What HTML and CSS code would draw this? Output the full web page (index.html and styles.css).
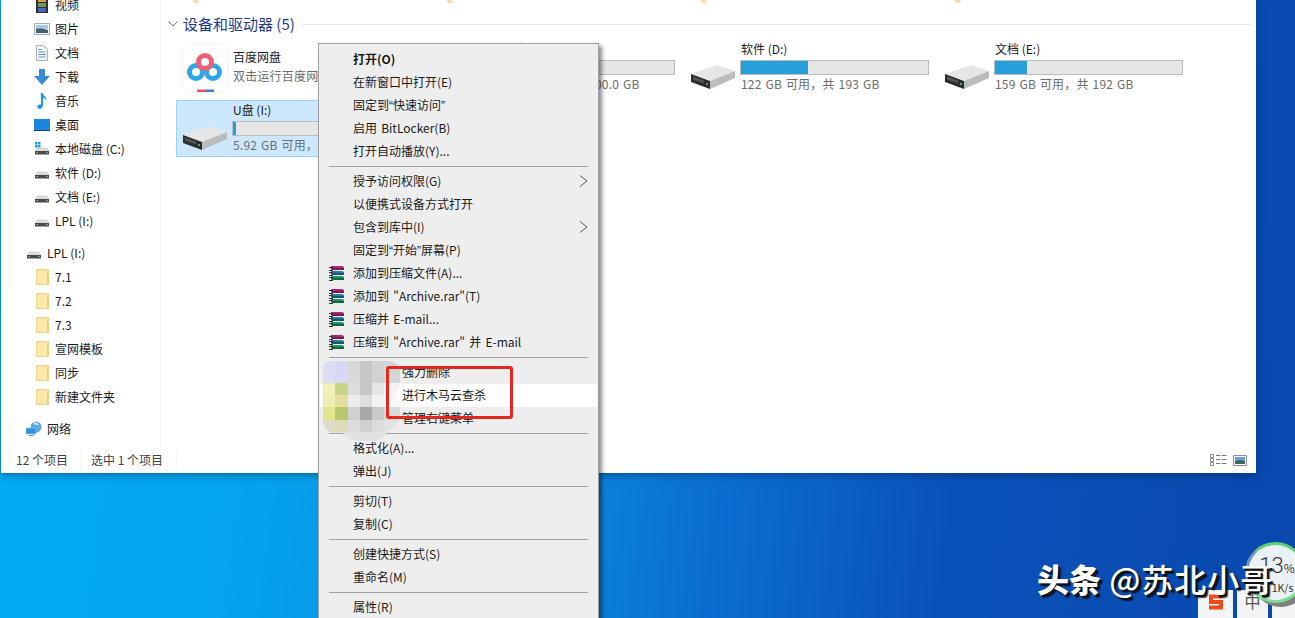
FILE: index.html
```html
<!DOCTYPE html>
<html lang="zh-CN">
<head>
<meta charset="utf-8">
<title>U盘 右键菜单</title>
<link rel="stylesheet" href="styles.css">
</head>
<body>
<svg class="defs" width="0" height="0" aria-hidden="true">
  <defs>
    <symbol id="drive-s" viewBox="0 0 16 16">
      <path d="M3 6.500h10l2 3v1H1v-1z" fill="#d8d8d8"/>
      <path d="M1 10h14v3.500H1z" fill="#4a4a4a"/>
      <path d="M2 11h2v1H2z" fill="#9a9a9a"/>
      <path d="M12 11h1.500v1H12z" fill="#8fe08f"/>
    </symbol>
    <symbol id="drive-l" viewBox="0 0 45 24">
      <path d="M0 9 26 0l18 6-25 10z" fill="#e6e6e6"/>
      <path d="M19 16 44 6v7L19 24z" fill="#bcbcbc"/>
      <path d="M0 9l19 7v8L0 17z" fill="#2c2c2c"/>
      <path d="M2 11.500l11 4v3l-11-4z" fill="#555"/>
      <circle cx="16" cy="19" r="1" fill="#5fd65f"/>
    </symbol>
    <symbol id="folder" viewBox="0 0 13 16">
      <path d="M.5.500h12v15H.5z" fill="#fce9a9" stroke="#f0d78c"/>
      <path d="M11 2h1.500v13.500H2V15h9z" fill="#ecce74"/>
    </symbol>
    <symbol id="rar" viewBox="0 0 16 16">
      <path d="M2 1h11l2 1v3H4L2 4z" fill="#b0247e"/>
      <path d="M2 6h11l2 1v3H4L2 9z" fill="#1f7fa8"/>
      <path d="M2 11h11l2 1v3H4l-2-1z" fill="#18985c"/>
      <path d="M2 4h13M2 9h13M2 14h13" stroke="#111" stroke-width=".8" fill="none"/>
      <path d="M0 2h4v1H0zM0 5h4v1H0zM0 7h4v1H0zM0 10h4v1H0zM0 12h4v1H0zM0 15h4v1H0z" fill="#333"/>
    </symbol>
    <symbol id="chev" viewBox="0 0 9 12">
      <path d="M1 .5 8 6l-7 5.500" fill="none" stroke="#5a5a5a" stroke-width="1"/>
    </symbol>
  </defs>
</svg>

<div class="desktop">
  <main class="explorer">
    <div class="explorer-body">
      <nav class="sidebar">
        <ul class="tree">
          <li class="node">
            <svg class="ico" viewBox="0 0 16 16"><path d="M2 0h12v16H2z" fill="#2f2f3a"/><path d="M4 1h8v4H4z" fill="#d8a040"/><path d="M4 6h8v4H4z" fill="#6a9a58"/><path d="M4 11h8v4H4z" fill="#4468c0"/></svg>
            <span>视频</span>
          </li>
          <li class="node">
            <svg class="ico" viewBox="0 0 16 16"><path d="M.5 2.500h15v11H.5z" fill="#f4f6f8" stroke="#a4acb4"/><path d="M2 4h12v4H2z" fill="#a8c8e8"/><path d="M2 8c4-1 8 0 12 1v3H2z" fill="#46606a"/></svg>
            <span>图片</span>
          </li>
          <li class="node">
            <svg class="ico" viewBox="0 0 16 16"><path d="M2.500.5h7l4 4v11h-11z" fill="#f6f8fa" stroke="#a8b0b8"/><path d="M4.500 4h3v1h-3zM4.500 6.500h7v1h-7zM4.500 9h7v1h-7zM4.500 11.500h7v1h-7z" fill="#4c9ad0"/></svg>
            <span>文档</span>
          </li>
          <li class="node">
            <svg class="ico" viewBox="0 0 16 16"><path d="M5 0h6v7h5l-8 9-8-9h5z" fill="#3d8bd8"/></svg>
            <span>下载</span>
          </li>
          <li class="node">
            <svg class="ico" viewBox="0 0 16 16"><path d="M7 0h1.800c.3 3 4.200 3.500 3.700 8-.6-2-2-3-3.500-3.300V12.500C9 15 6.500 16 5 15.800 3 15.600 2.800 13.500 4 12.300c.9-.9 2-1 3-.7z" fill="#1e96e6"/></svg>
            <span>音乐</span>
          </li>
          <li class="node">
            <svg class="ico" viewBox="0 0 16 16"><path d="M0 2h16v11H0z" fill="#1a86e0"/><path d="M0 13h16v1H0z" fill="#0c3e78"/></svg>
            <span>桌面</span>
          </li>
          <li class="node">
            <svg class="ico" viewBox="0 0 16 16"><use href="#drive-s"/><path d="M1 1h2.500v2.500H1zM4 1h2.500v2.500H4zM1 4h2.500v2.500H1zM4 4h2.500v2.500H4z" fill="#1ea0dc"/></svg>
            <span>本地磁盘 (C:)</span>
          </li>
          <li class="node"><svg class="ico"><use href="#drive-s"/></svg><span>软件 (D:)</span></li>
          <li class="node"><svg class="ico"><use href="#drive-s"/></svg><span>文档 (E:)</span></li>
          <li class="node"><svg class="ico"><use href="#drive-s"/></svg><span>LPL (I:)</span></li>
        </ul>
        <ul class="tree tree-gap">
          <li class="node root"><svg class="ico"><use href="#drive-s"/></svg><span>LPL (I:)</span></li>
          <li class="node"><svg class="ico-folder"><use href="#folder"/></svg><span>7.1</span></li>
          <li class="node"><svg class="ico-folder"><use href="#folder"/></svg><span>7.2</span></li>
          <li class="node"><svg class="ico-folder"><use href="#folder"/></svg><span>7.3</span></li>
          <li class="node"><svg class="ico-folder"><use href="#folder"/></svg><span>宣网模板</span></li>
          <li class="node"><svg class="ico-folder"><use href="#folder"/></svg><span>同步</span></li>
          <li class="node"><svg class="ico-folder"><use href="#folder"/></svg><span>新建文件夹</span></li>
        </ul>
        <ul class="tree tree-gap">
          <li class="node root">
            <svg class="ico" viewBox="0 0 16 16"><circle cx="10" cy="6" r="5.500" fill="#5aa8dc"/><path d="M7 2c3-1 5 0 6 2-3 0-5 0-6-2z" fill="#cfe8f8"/><path d="M0 7h10v6H0z" fill="#2e94e0" stroke="#8cc4ec" stroke-width=".6"/><path d="M3 14h5v1H3z" fill="#5a90b8"/></svg>
            <span>网络</span>
          </li>
        </ul>
      </nav>

      <section class="content">
        <div class="cutoff">
          <span class="cutoff-mark"></span>
          <span class="cutoff-mark"></span>
          <span class="cutoff-mark"></span>
          <span class="cutoff-mark"></span>
        </div>
        <header class="group-head">
          <svg class="group-chev" viewBox="0 0 10 6"><path d="M.5.500 5 5 9.500.5" fill="none" stroke="#7a7a7a"/></svg>
          <h2 class="group-title">设备和驱动器 (5)</h2>
          <div class="group-rule"></div>
        </header>
        <div class="tiles">
          <article class="tile">
            <div class="tile-icon">
              <svg class="baidu" viewBox="0 0 47 49">
                <rect x=".5" y=".5" width="46" height="48" rx="9" fill="#fff" stroke="#f2f2f2"/>
                <circle cx="14" cy="28" r="6.500" fill="none" stroke="#2ea7ea" stroke-width="5"/>
                <circle cx="31" cy="28" r="6.500" fill="none" stroke="#2ea7ea" stroke-width="5"/>
                <circle cx="23" cy="18" r="6.500" fill="none" stroke="#ee5f73" stroke-width="5"/>
                <path d="M15 45.500h8v2.500h-8z" fill="#ee4f62"/>
                <path d="M23 45.500h9v2.500h-9z" fill="#3a7fe0"/>
              </svg>
            </div>
            <div class="tile-info tile-info-app">
              <div class="tile-name">百度网盘</div>
              <div class="tile-sub">双击运行百度网盘</div>
            </div>
          </article>
          <article class="tile">
            <div class="tile-icon"><svg class="drive"><use href="#drive-l"/></svg></div>
            <div class="tile-info">
              <div class="tile-name">本地磁盘 (C:)</div>
              <div class="bar"><div class="bar-fill" style="width:60%"></div></div>
              <div class="tile-sub">40.0 GB 可用，共 100.0 GB</div>
            </div>
          </article>
          <article class="tile">
            <div class="tile-icon"><svg class="drive"><use href="#drive-l"/></svg></div>
            <div class="tile-info">
              <div class="tile-name">软件 (D:)</div>
              <div class="bar"><div class="bar-fill" style="width:36%"></div></div>
              <div class="tile-sub">122 GB 可用，共 193 GB</div>
            </div>
          </article>
          <article class="tile">
            <div class="tile-icon"><svg class="drive"><use href="#drive-l"/></svg></div>
            <div class="tile-info">
              <div class="tile-name">文档 (E:)</div>
              <div class="bar"><div class="bar-fill" style="width:17%"></div></div>
              <div class="tile-sub">159 GB 可用，共 192 GB</div>
            </div>
          </article>
          <article class="tile tile-selected">
            <div class="tile-icon"><svg class="drive"><use href="#drive-l"/></svg></div>
            <div class="tile-info">
              <div class="tile-name">U盘 (I:)</div>
              <div class="bar"><div class="bar-fill" style="width:1.500%"></div></div>
              <div class="tile-sub">5.92 GB 可用，共 7.5 GB</div>
            </div>
          </article>
        </div>
      </section>
    </div>

    <footer class="status">
      <span class="status-cell status-count">12 个项目</span>
      <span class="status-cell status-sel">选中 1 个项目</span>
      <div class="status-views">
        <svg class="view-ico" viewBox="0 0 17 12"><path d="M.5.500h3v3h-3zM.5 4.500h3v3h-3zM.5 8.500h3v3h-3z" fill="none" stroke="#8a8a8a"/><path d="M6 1.500h4M11.500 1.500h5M6 5.500h4M11.500 5.500h5M6 9.500h4M11.500 9.500h5" stroke="#777"/></svg>
        <svg class="view-ico view-ico-large" viewBox="0 0 14 11"><path d="M.5.500h13v10H.5z" fill="#fff" stroke="#8a9098"/><path d="M2 2h10v4H2z" fill="#6c9ce0"/><path d="M2 6c3-1 7-1 10 0v3H2z" fill="#3c6a50"/></svg>
      </div>
    </footer>
  </main>

  <div class="tray">
    <div class="tray-key"><svg class="sogou" viewBox="0 0 18 18"><path d="M16 3.500H4v5.500h10v5.500H2" fill="none" stroke="#f04a1c" stroke-width="4"/></svg></div>
    <div class="tray-key tray-key-ime">中</div>
    <div class="tray-key"></div>
  </div>
  <div class="meter">
    <div class="meter-value"><span class="meter-num">13</span><span class="meter-pct">%</span></div>
    <div class="meter-rate">1K/s</div>
  </div>
  <div class="watermark"><b>头条</b> @苏北小哥</div>

  <aside class="menu">
    <div class="item item-bold">打开(O)</div>
    <div class="item">在新窗口中打开(E)</div>
    <div class="item">固定到<span class="q">“</span>快速访问<span class="q">”</span></div>
    <div class="item">启用 BitLocker(B)</div>
    <div class="item">打开自动播放(Y)...</div>
    <div class="sep"></div>
    <div class="item">授予访问权限(G)<svg class="item-chev"><use href="#chev"/></svg></div>
    <div class="item">以便携式设备方式打开</div>
    <div class="item">包含到库中(I)<svg class="item-chev"><use href="#chev"/></svg></div>
    <div class="item">固定到<span class="q">“</span>开始<span class="q">”</span>屏幕(P)</div>
    <div class="item item-icon"><svg class="item-rar"><use href="#rar"/></svg>添加到压缩文件(A)...</div>
    <div class="item item-icon"><svg class="item-rar"><use href="#rar"/></svg>添加到 "Archive.rar"(T)</div>
    <div class="item item-icon"><svg class="item-rar"><use href="#rar"/></svg>压缩并 E-mail...</div>
    <div class="item item-icon"><svg class="item-rar"><use href="#rar"/></svg>压缩到 "Archive.rar" 并 E-mail</div>
    <div class="sep"></div>
    <div class="item item-far">强力删除</div>
    <div class="item item-far item-hover">进行木马云查杀</div>
    <div class="item item-far">管理右键菜单</div>
    <div class="sep"></div>
    <div class="item">格式化(A)...</div>
    <div class="item">弹出(J)</div>
    <div class="sep"></div>
    <div class="item">剪切(T)</div>
    <div class="item">复制(C)</div>
    <div class="sep"></div>
    <div class="item">创建快捷方式(S)</div>
    <div class="item">重命名(M)</div>
    <div class="sep"></div>
    <div class="item">属性(R)</div>
  </aside>

  <svg class="mosaic" viewBox="0 0 77 84" shape-rendering="crispEdges" aria-hidden="true">
    <defs><clipPath id="mosaic-clip"><path d="M6 0h60q8 0 11 8v18l-6 8 6 8v16q-3 8-12 12-4 8-14 10H33Q24 79 20 72H8Q0 68 0 60V8Q0 2 6 0z"/></clipPath></defs>
    <g clip-path="url(#mosaic-clip)">
      <path d="M0 0h12v22H0z" fill="#dcdcf2"/><path d="M12 0h13v22H12z" fill="#d8d8f6"/><path d="M25 0h12v22H25z" fill="#d8d8d8"/><path d="M37 0h12v22H37z" fill="#c6c6c6"/><path d="M49 0h12v22H49z" fill="#d2d2d2"/><path d="M61 0h16v22H61z" fill="#d6d6d6"/>
      <path d="M0 22h12v12H0z" fill="#eef2b8"/><path d="M12 22h13v12H12z" fill="#c8d488"/><path d="M25 22h12v12H25z" fill="#dcdcdc"/><path d="M37 22h12v12H37z" fill="#c6c6c6"/><path d="M49 22h12v12H49z" fill="#e6e6e6"/><path d="M61 22h16v12H61z" fill="#f4f4f4"/>
      <path d="M0 34h12v12H0z" fill="#eeeeb2"/><path d="M12 34h13v12H12z" fill="#e4e0a2"/><path d="M25 34h12v12H25z" fill="#ececec"/><path d="M37 34h12v12H37z" fill="#dedede"/><path d="M49 34h12v12H49z" fill="#f2f2f2"/><path d="M61 34h16v12H61z" fill="#f6f6f6"/>
      <path d="M0 46h12v13H0z" fill="#e2e68c"/><path d="M12 46h13v13H12z" fill="#b8c86a"/><path d="M25 46h12v13H25z" fill="#d0d0d0"/><path d="M37 46h12v13H37z" fill="#a8a8a8"/><path d="M49 46h12v13H49z" fill="#cacaca"/><path d="M61 46h16v13H61z" fill="#dadada"/>
      <path d="M0 59h12v12H0z" fill="#dcdcca"/><path d="M12 59h13v12H12z" fill="#dcdcba"/><path d="M25 59h12v12H25z" fill="#dcdcdc"/><path d="M37 59h12v12H37z" fill="#d0d0d0"/><path d="M49 59h12v12H49z" fill="#dcdcdc"/><path d="M61 59h16v12H61z" fill="#e2e2e2"/>
      <path d="M0 71h77v13H0z" fill="#e2e2e2"/>
    </g>
  </svg>
  <div class="callout"></div>
</div>
</body>
</html>
```
FILE: styles.css
```css
* { box-sizing: border-box; }

html, body {
  margin: 0;
  height: 100%;
  overflow: hidden;
}

body {
  font-family: "Noto Sans CJK SC", "Liberation Sans", sans-serif;
  font-size: 12px;
  color: #1a1a1a;
}

.defs { position: absolute; }

ul { list-style: none; margin: 0; padding: 0; }

.desktop {
  position: relative;
  width: 1295px;
  height: 618px;
  padding-left: 1px;
  overflow: hidden;
  background: linear-gradient(98deg, #00acf4 0%, #04a4ee 22%, #0a8ee0 42%, #0a6cd0 58%, #0a52ba 74%, #0a48ae 100%);
}

/* Explorer window */
.explorer {
  width: 1255px;
  height: 473px;
  display: flex;
  flex-direction: column;
  background: #fff;
  box-shadow: 0 2px 8px rgba(0, 30, 60, .45);
  overflow: hidden;
}

.explorer-body {
  flex: 1;
  min-height: 0;
  display: flex;
}

.sidebar {
  flex: 0 0 160px;
  border-right: 1px solid #f2f2f2;
  overflow: hidden;
}

.tree:first-child { margin-top: -7px; }
.tree-gap { margin-top: 8px; }

.node {
  height: 24px;
  display: flex;
  align-items: center;
  gap: 5px;
  padding-left: 33px;
  line-height: 24px;
  white-space: nowrap;
}

.node.root { padding-left: 25px; gap: 5px; }

.ico { width: 16px; height: 16px; flex: none; }

.ico-folder {
  width: 13px;
  height: 16px;
  flex: none;
  margin: 0 1px 0 2px;
}

/* Content pane */
.content {
  flex: 1;
  min-width: 0;
  padding-left: 7px;
}

.cutoff {
  height: 3px;
  display: flex;
  margin-left: 9px;
  overflow: hidden;
}

.cutoff-mark {
  flex: 0 0 254px;
  position: relative;
}

.cutoff-mark::after {
  content: "";
  position: absolute;
  left: 16px;
  top: -1px;
  width: 5px;
  height: 4px;
  background: #fbdca8;
  transform: skewX(35deg);
}

.group-head {
  height: 36px;
  display: flex;
  align-items: center;
  padding-top: 6px;
}

.group-chev { width: 10px; height: 6px; flex: none; }

.group-title {
  margin: 0 0 0 5px;
  font-size: 15px;
  font-weight: 400;
  line-height: 24px;
  color: #1e3a8c;
  white-space: nowrap;
}

.group-rule {
  flex: 1;
  height: 1px;
  margin: 0 5px 0 7px;
  background: #e6e6e6;
}

.tiles {
  display: grid;
  grid-template-columns: repeat(4, 250px);
  grid-auto-rows: 57px;
  gap: 4px;
  margin-left: 8px;
}

.tile {
  display: flex;
  border: 1px solid transparent;
}

.tile-selected {
  background: #cce8ff;
  border-color: #99d1ff;
}

.tile-icon {
  flex: 0 0 56px;
  display: flex;
  align-items: center;
  justify-content: center;
}

.drive {
  width: 45px;
  height: 24px;
  margin-top: 19px;
  margin-left: 1px;
}

.baidu { width: 47px; height: 49px; margin-top: 1px; }

.tile-info {
  flex: 1;
  min-width: 0;
  padding-top: 1px;
}

.tile-info-app { padding-top: 9px; }

.tile-name {
  line-height: 16px;
  height: 18px;
  white-space: nowrap;
}

.tile-sub {
  line-height: 18px;
  height: 18px;
  color: #6d6d6d;
  white-space: nowrap;
  letter-spacing: .2px;
  word-spacing: 1px;
}

.bar {
  width: 189px;
  height: 15px;
  margin: 1px 0 0 -1px;
  border: 1px solid #bcbcbc;
  background: #e6e6e6;
}

.bar-fill {
  height: 100%;
  background: #26a0da;
}

/* Status bar */
.status {
  flex: 0 0 26px;
  display: flex;
  align-items: center;
  padding-left: 15px;
  color: #3f3f3f;
}

.status-cell {
  line-height: 22px;
  white-space: nowrap;
  border-right: 1px solid #f6f6f6;
}

.status-count { width: 65px; }
.status-sel { width: 96px; padding-left: 10px; }

.status-views {
  margin-left: auto;
  display: flex;
  align-items: center;
  gap: 6px;
  padding-right: 9px;
}

.view-ico { width: 17px; height: 12px; }
.view-ico-large { width: 14px; height: 11px; }

/* Context menu */
.menu {
  position: absolute;
  left: 318px;
  top: 43px;
  width: 281px;
  padding: 4px 1px 0;
  background: #eeeeee;
  border: 1px solid #a0a0a0;
  box-shadow: 3px 3px 4px rgba(0, 0, 0, .45);
}

.item {
  position: relative;
  height: 23px;
  padding-left: 33px;
  line-height: 22px;
  white-space: nowrap;
  word-spacing: 1.500px;
  color: #1a1a1a;
}

.q { font-family: "Liberation Sans", sans-serif; }

.item-bold { font-weight: 700; }
.item-far { padding-left: 82px; }
.item-hover { background: #fff; }

.item-icon { display: flex; align-items: flex-start; padding-left: 9px; }

.item-rar {
  width: 16px;
  height: 16px;
  flex: none;
  margin: 3px 8px 0 0;
}

.item-chev {
  position: absolute;
  right: 9px;
  top: 5px;
  width: 9px;
  height: 12px;
}

.sep {
  height: 1px;
  margin: 3px 9px;
  background: #a0a0a0;
}

/* Overlays on the menu */
.mosaic {
  position: absolute;
  left: 323px;
  top: 361px;
  width: 77px;
  height: 84px;
}

.callout {
  position: absolute;
  left: 386px;
  top: 366px;
  width: 127px;
  height: 53px;
  border: 3px solid #e4281e;
  border-radius: 3px;
}

/* Desktop items */
.tray {
  position: absolute;
  left: 1198px;
  top: 590px;
  display: flex;
  gap: 4px;
}

.tray-key {
  width: 35px;
  height: 40px;
  background: #f3f4f6;
  display: flex;
  justify-content: center;
  color: #555;
  font-size: 16px;
  line-height: 22px;
}

.tray-key-ime { width: 31px; }

.sogou { width: 18px; height: 18px; margin-top: 3px; }

.meter {
  position: absolute;
  left: 1245px;
  top: 542px;
  width: 61px;
  height: 61px;
  border-radius: 50%;
  border: 3px solid #7fdc8e;
  border-top-color: #62cf76;
  border-left-color: #7090cc;
  background: #eaf2f5;
  box-shadow: 5px 5px 0 -1px #808080;
  color: #333;
  text-align: center;
}

.meter-value {
  margin-top: 8px;
  padding-left: 3px;
  line-height: 26px;
  white-space: nowrap;
}

.meter-num {
  font-family: Roboto, "Liberation Sans", sans-serif;
  font-size: 22px;
  font-weight: 300;
}

.meter-pct { font-size: 12px; }

.meter-rate {
  font-size: 10.500px;
  line-height: 14px;
  padding-left: 14px;
}

.watermark {
  position: absolute;
  left: 1037px;
  top: 556px;
  font-size: 32px;
  line-height: 44px;
  font-weight: 500;
  color: #fff;
  white-space: nowrap;
  letter-spacing: 1px;
  word-spacing: 0;
  text-shadow: 2px 2px 0 #111, 3px 3px 1px rgba(0, 0, 0, .7);
}

.watermark b { font-weight: 900; font-size: 32px; letter-spacing: 0; }
```
